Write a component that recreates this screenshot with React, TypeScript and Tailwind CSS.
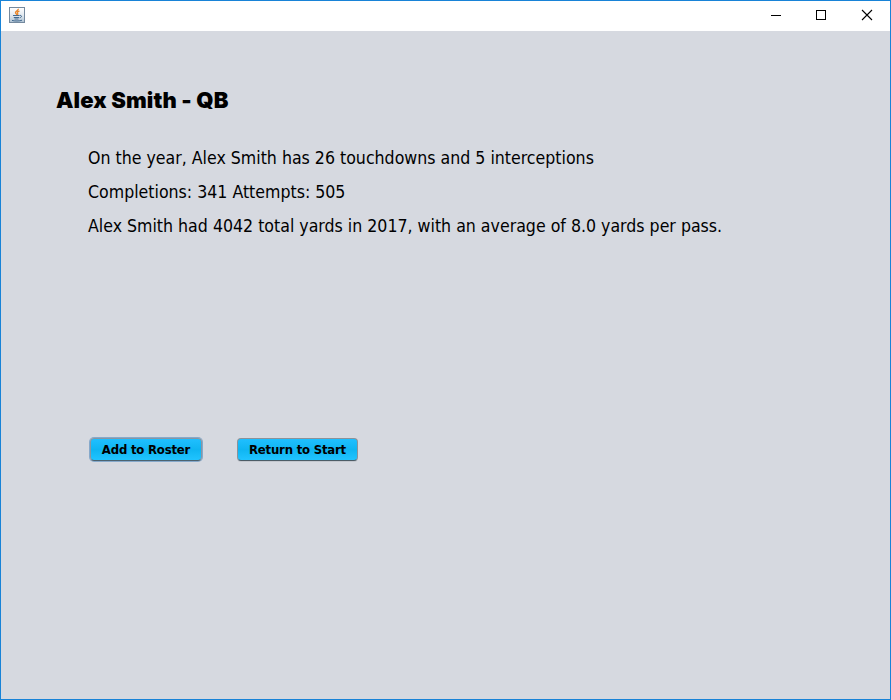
import React from "react";

function JavaIcon() {
  return (
    <svg width="16" height="16" viewBox="0 0 16 16" className="shrink-0">
      <defs>
        <linearGradient id="tile" x1="0" y1="0" x2="0" y2="1">
          <stop offset="0" stopColor="#ffffff" />
          <stop offset="0.5" stopColor="#e3eaf0" />
          <stop offset="1" stopColor="#adc1d2" />
        </linearGradient>
      </defs>
      <rect x="0.5" y="0.5" width="15" height="15" fill="url(#tile)" stroke="#74899e" />
      <path d="M9.2 1.8C10 3.5 6.3 4 6.5 5.6C6.6 6.4 7.6 6.8 7.8 7.8M10.5 4C8.8 4.6 8 5.2 8.6 6.2C9 6.8 8.8 7.4 8.5 7.8" fill="none" stroke="#e98528" strokeWidth="1.3" />
      <path d="M4 8.5H10.5M4.8 10.5H10M5.5 12H9.5M10.7 8.4C13.4 8 12.8 10.6 10.6 10.8M3 13.4C5 14.2 11 14.2 13 13.2" fill="none" stroke="#42698f" strokeWidth="1" />
    </svg>
  );
}

function TitleBar() {
  return (
    <header className="flex h-[30px] items-start justify-between bg-white pl-2">
      <div className="pt-1.5">
        <JavaIcon />
      </div>
      <div className="flex h-[30px] items-start">
        <button aria-label="Minimize" className="h-[29px] w-[46px]">
          <svg width="46" height="29" shapeRendering="crispEdges"><path d="M18 14.5h10" stroke="#000" /></svg>
        </button>
        <button aria-label="Maximize" className="h-[29px] w-[46px]">
          <svg width="46" height="29" shapeRendering="crispEdges"><rect x="17.5" y="9.5" width="9" height="9" fill="none" stroke="#000" /></svg>
        </button>
        <button aria-label="Close" className="h-[29px] w-[45px]">
          <svg width="45" height="29"><path d="M17 9l10 10M27 9l-10 10" stroke="#000" strokeWidth="1.1" /></svg>
        </button>
      </div>
    </header>
  );
}

export default function App() {
  return (
    <div className="flex h-[700px] w-[891px] flex-col border border-[#1883d7] bg-[#d6d9e0] text-black">
      <TitleBar />
      <main className="flex-1 pl-[55px] pt-[53px]">
        <h1 className="h-[32px] whitespace-nowrap text-[22px] leading-[32px] font-black tracking-[0.1px] [font-feature-settings:'calt'_0] [font-family:Inter,sans-serif]">
          Alex Smith - QB
        </h1>
        <div className="ml-8 mt-[25px] whitespace-nowrap text-[17.58px] leading-[34px] [font-family:'DejaVu_Sans_Condensed','DejaVu_Sans',sans-serif] [font-stretch:condensed]">
          <p>On the year, Alex Smith has 26 touchdowns and 5 interceptions</p>
          <p>Completions: 341 Attempts: 505</p>
          <p>Alex Smith had 4042 total yards in 2017, with an average of 8.0 yards per pass.</p>
        </div>
        <div className="mt-[195px] ml-[34px] flex items-center gap-[35px] text-[13px] font-bold tracking-[-0.2px] [font-family:'DejaVu_Sans_Condensed','DejaVu_Sans',sans-serif] [font-stretch:condensed]">
          <button className="h-[23px] w-[112px] rounded-[4px] border border-[#8796a3] border-b-[#4c6370] bg-linear-to-b from-[#1fbfff] via-[#0fb5f2] to-[#20c4ff] shadow-[0_0_0_1px_#86a9cb] whitespace-nowrap">
            Add to Roster
          </button>
          <button className="h-[23px] w-[121px] rounded-[4px] border border-[#8c9299] border-b-[#4c5c66] bg-linear-to-b from-[#1fbfff] via-[#0fb5f2] to-[#20c4ff] shadow-[0_1px_0_#c3c7ce] whitespace-nowrap">
            Return to Start
          </button>
        </div>
      </main>
    </div>
  );
}
